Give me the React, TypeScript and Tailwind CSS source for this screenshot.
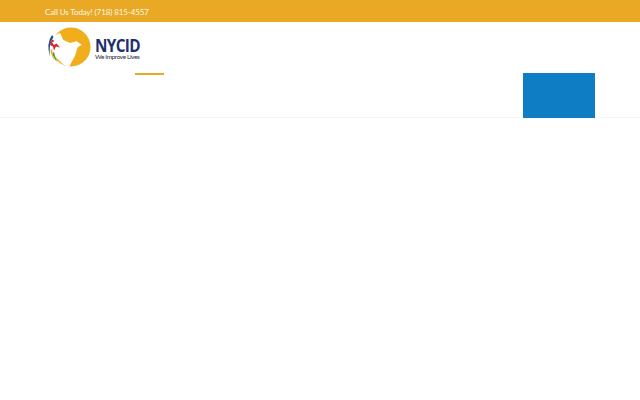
function Logo() {
  return (
    <svg width="48" height="44" viewBox="0 0 48 44" className="shrink-0">
      {/* sun with dove cut out, origin at 45,26 */}
      <circle cx="26" cy="21" r="19.5" fill="#f0ae1c" />
      <path d="M15 7 L18.3 14 L25 17 L31.7 15.3 L36.7 18.7 L32.7 21.3 L30 29.7 L24 41 L18.3 38.5 L11.7 32 L7 28 L5 18 L8 10 Z" fill="#fff" />
      <path d="M7 9 Q1 17 5 31 Q3.5 18 8.5 11 Z" fill="#1d4f91" />
      <path d="M5.5 24 Q6 30 10 35 Q7.5 30 7 23 Z" fill="#f0ae1c" />
      <path d="M7.5 27 Q8 31 12 36 Q10 31 9 26 Z" fill="#3f9a45" />
      <path d="M6 15 L9 19 L11.5 17.5 L15 21.5 L11 20.5 L9 24.5 L8 20.5 L5 19 Z" fill="#d8262c" />
      <circle cx="7.5" cy="15" r="1.3" fill="#d8262c" />
    </svg>
  );
}

export default function App() {
  return (
    <div className="w-[640px] h-[400px] bg-white overflow-hidden font-['Lato',sans-serif]">
      <div className="h-[22px] bg-[#e9a925] pl-[45px] pt-[1px] flex items-center">
        <span className="text-[8px] text-white/95 whitespace-nowrap tracking-[-0.1px]">Call Us Today! (718) 815-4557</span>
      </div>

      <div className="h-[51px] pl-[45px] pt-[4px] flex items-start">
        <Logo />
        <div className="ml-[2px] mt-[14px] flex flex-col">
          <span className="text-[17px] leading-[12px] font-bold text-[#1c2f6e] font-['Open_Sans',sans-serif] tracking-[-0.7px] scale-x-90 origin-left">NYCID</span>
          <span className="mt-[1px] text-[6.5px] leading-[7px] text-[#2a2a3a] tracking-[-0.4px] whitespace-nowrap">We Improve Lives</span>
        </div>
      </div>

      <div className="h-[45px] border-b border-[#f4f4f4] flex items-start">
        <div className="ml-[135px] w-[29px] h-[2px] bg-[#e9a925]" />
        <div className="ml-[359px] w-[72px] h-[45px] bg-[#0e7dc4]" />
      </div>
    </div>
  );
}
